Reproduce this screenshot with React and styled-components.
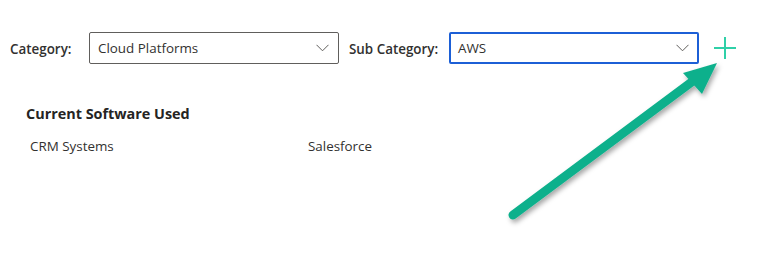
import React from "react"
import styled, { createGlobalStyle } from "styled-components"

const GlobalStyle = createGlobalStyle`
  html, body {
    margin: 0;
    padding: 0;
    background: #ffffff;
    font-family: 'Open Sans', 'Noto Sans', sans-serif;
  }
`;

function Chevron() {
  return (
    <svg width="13" height="8" viewBox="0 0 13 8">
      <path d="M0.5 0.8 L6.5 6.8 L12.5 0.8" fill="none" stroke="#605e5c" strokeWidth="1" />
    </svg>
  );
}

function Arrow() {
  return (
    <ArrowSvg width="764" height="262" viewBox="0 0 764 262">
      <defs>
        <filter id="shadow" x="-20%" y="-20%" width="140%" height="140%">
          <feDropShadow dx="2" dy="3" stdDeviation="2.5" floodColor="#000" floodOpacity="0.35" />
        </filter>
      </defs>
      <g filter="url(#shadow)">
        <line x1="513" y1="215" x2="693" y2="81" stroke="#10b08c" strokeWidth="9" strokeLinecap="round" />
        <polygon points="717,63 683,73 702,94" fill="#10b08c" />
      </g>
    </ArrowSvg>
  );
}

function App() {
  return (
    <Wrapper>
      <GlobalStyle />
      <Toolbar>
        <Label width={79}>Category:</Label>
        <Select>
          <span>Cloud Platforms</span>
          <Chevron />
        </Select>
        <Label width={100} lead={10}>Sub Category:</Label>
        <Select active>
          <span>AWS</span>
          <Chevron />
        </Select>
        <AddButton aria-label="add">
          <svg width="22" height="22" viewBox="0 0 22 22">
            <path d="M11 0 V22 M0 11 H22" stroke="#2fd0a8" strokeWidth="2" />
          </svg>
        </AddButton>
      </Toolbar>

      <Section>
        <Heading>Current Software Used</Heading>
        <Row>
          <Cell>CRM Systems</Cell>
          <Cell>Salesforce</Cell>
        </Row>
      </Section>

      <Arrow />
    </Wrapper>
  );
}

export default App


const Wrapper = styled.div`
  position: relative;
  width: 764px;
  height: 262px;
  overflow: hidden;
`;

const Toolbar = styled.div`
  display: flex;
  align-items: center;
  padding: 32px 0 0 10px;
  height: 32px;
`;

const Label = styled.label`
  flex: 0 0 ${(p) => p.width}px;
  margin-left: ${(p) => p.lead || 0}px;
  font-size: 13.4px;
  font-weight: 600;
  color: #323130;
  white-space: nowrap;
  padding-top: 1px;
`;

const Select = styled.div`
  box-sizing: border-box;
  flex: 0 0 250px;
  height: 32px;
  display: flex;
  align-items: center;
  justify-content: space-between;
  padding: ${(p) => (p.active ? "0 8px 0 7px" : "0 9px 0 8px")};
  border: ${(p) => (p.active ? "2px solid #1c5fd6" : "1px solid #605e5c")};
  border-radius: 2px;
  font-size: 13.4px;
  color: #323130;
`;

const AddButton = styled.div`
  margin-left: 15px;
  display: flex;
  align-items: center;
  margin-top: -1px;
`;

const Section = styled.div`
  padding: 40px 0 0 26px;
`;

const Heading = styled.div`
  font-size: 14.4px;
  font-weight: 700;
  color: #252423;
`;

const Row = styled.div`
  display: grid;
  grid-template-columns: 278px auto;
  padding: 14px 0 0 4px;
`;

const Cell = styled.div`
  font-size: 13.4px;
  color: #323130;
`;

const ArrowSvg = styled.svg`
  position: absolute;
  left: 0;
  top: 0;
  pointer-events: none;
`;
